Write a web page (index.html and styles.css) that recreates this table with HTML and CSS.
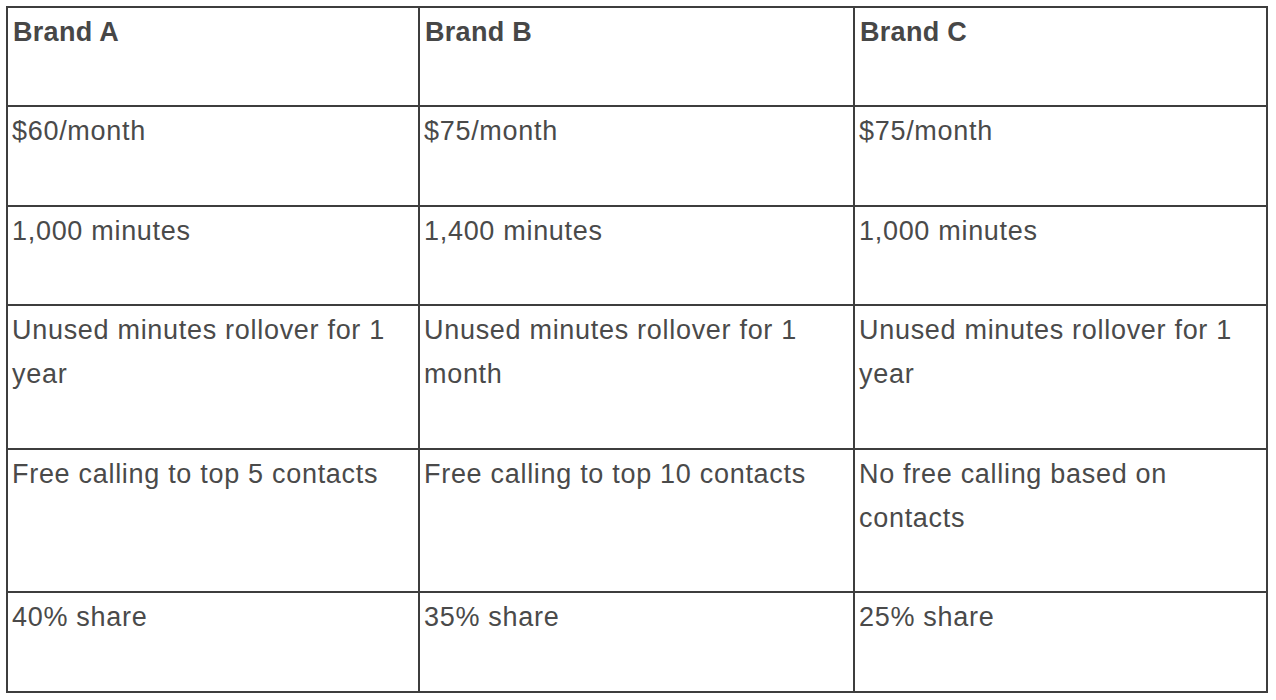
FILE: index.html
```html
<!DOCTYPE html>
<html lang="en">
<head>
<meta charset="utf-8">
<title>Brand comparison</title>
<link rel="stylesheet" href="styles.css">
</head>
<body>
<div class="compare" role="table">
  <div class="cell head" role="columnheader">Brand A</div>
  <div class="cell head" role="columnheader">Brand B</div>
  <div class="cell head" role="columnheader">Brand C</div>

  <div class="cell" role="cell">$60/month</div>
  <div class="cell" role="cell">$75/month</div>
  <div class="cell" role="cell">$75/month</div>

  <div class="cell" role="cell">1,000 minutes</div>
  <div class="cell" role="cell">1,400 minutes</div>
  <div class="cell" role="cell">1,000 minutes</div>

  <div class="cell" role="cell">Unused minutes rollover for 1 year</div>
  <div class="cell" role="cell">Unused minutes rollover for 1 month</div>
  <div class="cell" role="cell">Unused minutes rollover for 1 year</div>

  <div class="cell" role="cell">Free calling to top 5 contacts</div>
  <div class="cell" role="cell">Free calling to top 10 contacts</div>
  <div class="cell" role="cell">No free calling based on contacts</div>

  <div class="cell" role="cell">40% share</div>
  <div class="cell" role="cell">35% share</div>
  <div class="cell" role="cell">25% share</div>
</div>
</body>
</html>
```

FILE: styles.css
```css
html, body {
  margin: 0;
  padding: 0;
  background: #ffffff;
}

body {
  padding: 6px;
  font-family: "Liberation Sans", Arial, sans-serif;
}

.compare {
  display: grid;
  width: 1262px;
  box-sizing: border-box;
  grid-template-columns: 410px 433px 411px;
  grid-template-rows: 97px 98px 97px 142px 141px 98px;
  gap: 2px;
  padding: 2px;
  background: #3e3e3e;
}

.cell {
  background: #ffffff;
  color: #4a4a4a;
  font-size: 27px;
  line-height: 44px;
  letter-spacing: 0.7px;
  padding: 2px 4px 0 4px;
  box-sizing: border-box;
  overflow: hidden;
}

.head {
  font-weight: bold;
  letter-spacing: 0.3px;
  padding-left: 5px;
  color: #474747;
}
```
